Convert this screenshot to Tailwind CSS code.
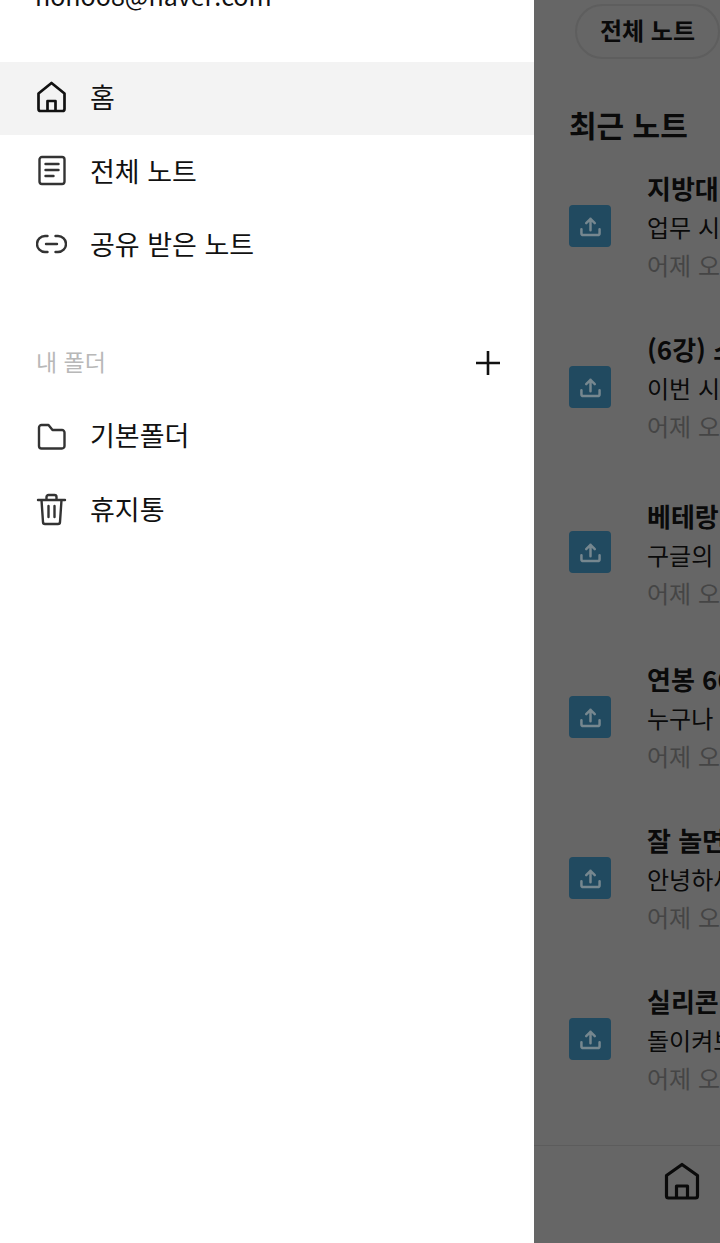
<!DOCTYPE html>
<html lang="ko">
<head>
  <meta charset="UTF-8" />
  <meta name="viewport" content="width=device-width, initial-scale=1.0"/>
  <title>노트</title>
  <script src="https://cdn.jsdelivr.net/npm/@tailwindcss/browser@4"></script>
</head>
<body class="bg-white font-['Noto_Sans_CJK_KR','Noto_Sans',sans-serif]">
<div class="flex w-[720px] h-[1243px] overflow-hidden">

  <!-- 드로어 -->
  <aside class="w-[534px] shrink-0 bg-white text-[#111]">
    <div class="h-[62px] overflow-hidden">
      <p class="pl-[35px] -mt-[21px] h-[32px] text-[25px] leading-[32px] text-[#111]">honoo8@naver.com</p>
    </div>

    <a class="flex items-center h-[73px] pb-[3px] px-[36px] gap-[23px] bg-[#f3f3f3]">
      <svg class="w-[31px] h-[34px] shrink-0" viewBox="0 0 31 34" fill="none" stroke="#111" stroke-width="2.700" stroke-linejoin="round">
        <path d="M2.500 13.500 15.500 3l13 10.500V29a2 2 0 0 1-2 2h-22a2 2 0 0 1-2-2z"/>
        <path d="M11.500 31V21h8v10"/>
      </svg>
      <span class="text-[27px] leading-[34px]">홈</span>
    </a>
    <a class="flex items-center h-[74px] pb-[3px] px-[36px] gap-[23px]">
      <svg class="w-[31px] h-[32px] shrink-0" viewBox="0 0 31 32" fill="none" stroke="#333" stroke-width="2.400" stroke-linecap="round" stroke-linejoin="round">
        <rect x="3.500" y="2" width="25" height="27" rx="2.500"/>
        <path d="M9.500 9h13M9.500 15h13M9.500 21h8"/>
      </svg>
      <span class="text-[27px] leading-[34px]">전체 노트</span>
    </a>
    <a class="flex items-center h-[73px] pb-[3px] px-[36px] gap-[23px]">
      <svg class="w-[31px] h-[20px] shrink-0" viewBox="0 0 31 20" fill="none" stroke="#333" stroke-width="2.400" stroke-linecap="round">
        <path d="M11.500 2H9a8 8 0 0 0 0 16h2.500M19.500 2H22a8 8 0 0 1 0 16h-2.500M10 10h11"/>
      </svg>
      <span class="text-[27px] leading-[34px]">공유 받은 노트</span>
    </a>

    <div class="flex items-center justify-between h-[74px] mt-[44px] pl-[36px] pr-[33px]">
      <span class="text-[23px] leading-[28px] -mt-[5px] text-[#b8b8b8]">내 폴더</span>
      <svg class="w-[26px] h-[26px]" viewBox="0 0 26 26" fill="none" stroke="#111" stroke-width="2.600"><path d="M13 1v24M1 13h24"/></svg>
    </div>

    <a class="flex items-center h-[74px] pb-[4px] px-[36px] gap-[23px]">
      <svg class="w-[31px] h-[28px] shrink-0 mt-[3px]" viewBox="0 0 31 28" fill="none" stroke="#333" stroke-width="2.400" stroke-linejoin="round">
        <path d="M3 4.500A2.500 2.500 0 0 1 5.500 2h7l4 5H26a2.500 2.500 0 0 1 2.500 2.500V23a2.500 2.500 0 0 1-2.500 2.500H5.500A2.500 2.500 0 0 1 3 23z"/>
      </svg>
      <span class="text-[27px] leading-[34px]">기본폴더</span>
    </a>
    <a class="flex items-center h-[74px] pb-[4px] px-[36px] gap-[23px]">
      <svg class="w-[31px] h-[33px] shrink-0" viewBox="0 0 31 33" fill="none" stroke="#333" stroke-width="2.400" stroke-linecap="round" stroke-linejoin="round">
        <path d="M2 7h27M10.500 7V4a2 2 0 0 1 2-2h6a2 2 0 0 1 2 2v3M5.500 7 7 29a2 2 0 0 0 2 2h13a2 2 0 0 0 2-2l1.500-22M12.500 13v11M18.500 13v11"/>
      </svg>
      <span class="text-[27px] leading-[34px]">휴지통</span>
    </a>
  </aside>

  <!-- 어두워진 본문 -->
  <main class="w-[186px] shrink-0 bg-[#666666] text-[#0a0a0a] overflow-hidden">
    <div class="h-[55px] w-[145px] mt-[4px] ml-[41px] pb-[3px] border-2 border-[#5e5e5e] rounded-full flex items-center justify-center">
      <span class="text-[24px] leading-[30px] font-bold whitespace-nowrap">전체 노트</span>
    </div>

    <h2 class="mt-[45px] ml-[35px] h-[40px] text-[30px] leading-[40px] font-bold whitespace-nowrap">최근 노트</h2>

    <div class="flex flex-col mt-[22px] ml-[35px] w-[400px]">
      <div class="flex items-center h-[120px] gap-[36px]">
        <div class="w-[42px] h-[42px] rounded-[4px] bg-[#214a60] flex items-center justify-center shrink-0">
          <svg class="w-[21px] h-[21px]" viewBox="0 0 22 22" fill="none" stroke="#76878f" stroke-width="2.600" stroke-linecap="round" stroke-linejoin="round"><path d="M11 15V3M6.500 7.500 11 3l4.500 4.500M1.500 14v4a2 2 0 0 0 2 2h15a2 2 0 0 0 2-2v-4"/></svg>
        </div>
        <div class="flex flex-col whitespace-nowrap">
          <p class="text-[26px] leading-[40px] font-bold">지방대 출신이 대기업</p>
          <p class="text-[24px] leading-[38px]">업무 시간에 몰래 보는</p>
          <p class="text-[24px] leading-[38px] text-[#454545]">어제 오후 3:12</p>
        </div>
      </div>
      <div class="flex items-center h-[120px] gap-[36px] mt-[41px]">
        <div class="w-[42px] h-[42px] rounded-[4px] bg-[#214a60] flex items-center justify-center shrink-0">
          <svg class="w-[21px] h-[21px]" viewBox="0 0 22 22" fill="none" stroke="#76878f" stroke-width="2.600" stroke-linecap="round" stroke-linejoin="round"><path d="M11 15V3M6.500 7.500 11 3l4.500 4.500M1.500 14v4a2 2 0 0 0 2 2h15a2 2 0 0 0 2-2v-4"/></svg>
        </div>
        <div class="flex flex-col whitespace-nowrap">
          <p class="text-[26px] leading-[40px] font-bold">(6강) 소프트웨어 개발</p>
          <p class="text-[24px] leading-[38px]">이번 시간에는 함께</p>
          <p class="text-[24px] leading-[38px] text-[#454545]">어제 오후 3:10</p>
        </div>
      </div>
      <div class="flex items-center h-[120px] gap-[36px] mt-[45px]">
        <div class="w-[42px] h-[42px] rounded-[4px] bg-[#214a60] flex items-center justify-center shrink-0">
          <svg class="w-[21px] h-[21px]" viewBox="0 0 22 22" fill="none" stroke="#76878f" stroke-width="2.600" stroke-linecap="round" stroke-linejoin="round"><path d="M11 15V3M6.500 7.500 11 3l4.500 4.500M1.500 14v4a2 2 0 0 0 2 2h15a2 2 0 0 0 2-2v-4"/></svg>
        </div>
        <div class="flex flex-col whitespace-nowrap pt-[4px]">
          <p class="text-[26px] leading-[40px] font-bold">베테랑 개발자가 말하는</p>
          <p class="text-[24px] leading-[38px]">구글의 수석 개발자</p>
          <p class="text-[24px] leading-[38px] text-[#454545]">어제 오후 3:08</p>
        </div>
      </div>
      <div class="flex items-center h-[120px] gap-[36px] mt-[45px]">
        <div class="w-[42px] h-[42px] rounded-[4px] bg-[#214a60] flex items-center justify-center shrink-0">
          <svg class="w-[21px] h-[21px]" viewBox="0 0 22 22" fill="none" stroke="#76878f" stroke-width="2.600" stroke-linecap="round" stroke-linejoin="round"><path d="M11 15V3M6.500 7.500 11 3l4.500 4.500M1.500 14v4a2 2 0 0 0 2 2h15a2 2 0 0 0 2-2v-4"/></svg>
        </div>
        <div class="flex flex-col whitespace-nowrap">
          <p class="text-[26px] leading-[40px] font-bold">연봉 6000 받는 법</p>
          <p class="text-[24px] leading-[38px]">누구나 할 수 있는</p>
          <p class="text-[24px] leading-[38px] text-[#454545]">어제 오후 3:05</p>
        </div>
      </div>
      <div class="flex items-center h-[120px] gap-[36px] mt-[41px]">
        <div class="w-[42px] h-[42px] rounded-[4px] bg-[#214a60] flex items-center justify-center shrink-0">
          <svg class="w-[21px] h-[21px]" viewBox="0 0 22 22" fill="none" stroke="#76878f" stroke-width="2.600" stroke-linecap="round" stroke-linejoin="round"><path d="M11 15V3M6.500 7.500 11 3l4.500 4.500M1.500 14v4a2 2 0 0 0 2 2h15a2 2 0 0 0 2-2v-4"/></svg>
        </div>
        <div class="flex flex-col whitespace-nowrap">
          <p class="text-[26px] leading-[40px] font-bold">잘 놀면서 돈 버는</p>
          <p class="text-[24px] leading-[38px]">안녕하세요 여러분</p>
          <p class="text-[24px] leading-[38px] text-[#454545]">어제 오후 3:02</p>
        </div>
      </div>
      <div class="flex items-center h-[120px] gap-[36px] mt-[41px]">
        <div class="w-[42px] h-[42px] rounded-[4px] bg-[#214a60] flex items-center justify-center shrink-0">
          <svg class="w-[21px] h-[21px]" viewBox="0 0 22 22" fill="none" stroke="#76878f" stroke-width="2.600" stroke-linecap="round" stroke-linejoin="round"><path d="M11 15V3M6.500 7.500 11 3l4.500 4.500M1.500 14v4a2 2 0 0 0 2 2h15a2 2 0 0 0 2-2v-4"/></svg>
        </div>
        <div class="flex flex-col whitespace-nowrap">
          <p class="text-[26px] leading-[40px] font-bold">실리콘밸리 이야기</p>
          <p class="text-[24px] leading-[38px]">돌이켜보면 그때</p>
          <p class="text-[24px] leading-[38px] text-[#454545]">어제 오후 3:00</p>
        </div>
      </div>
    </div>

    <!-- 하단 탭 -->
    <div class="mt-[46px] border-t border-[#5c5c5c] h-[98px] pt-[16px] pl-[130px]">
      <svg class="w-[36px] h-[38px]" viewBox="0 0 36 38" fill="none" stroke="#0a0a0a" stroke-width="3.200" stroke-linejoin="round">
        <path d="M2.500 13.500 18 2.500l15.500 11V34a2 2 0 0 1-2 2h-27a2 2 0 0 1-2-2z"/>
        <path d="M12.500 36V24h11v12"/>
      </svg>
    </div>
  </main>
</div>
</body>
</html>
